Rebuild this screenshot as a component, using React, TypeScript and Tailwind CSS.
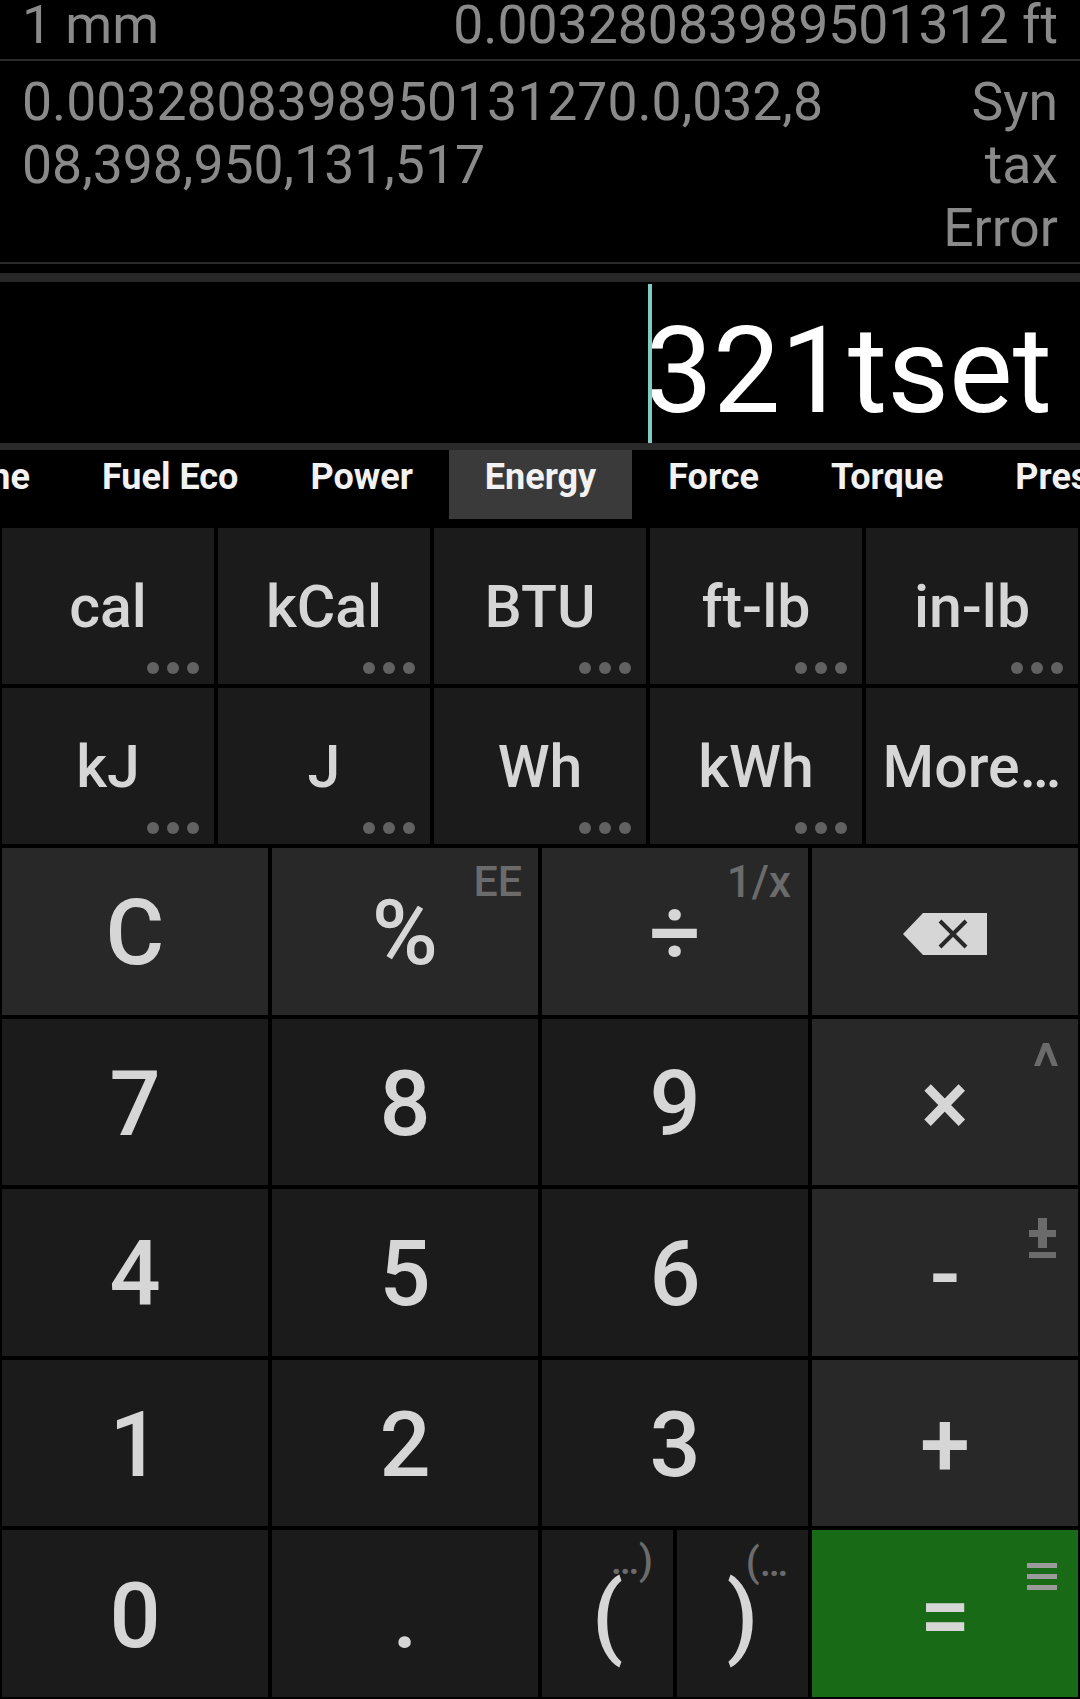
import React from "react";

const units: [string, boolean][] = [
  ["cal", true],
  ["kCal", true],
  ["BTU", true],
  ["ft-lb", true],
  ["in-lb", true],
  ["kJ", true],
  ["J", true],
  ["Wh", true],
  ["kWh", true],
  ["More…", false],
];

const tabs = ["Fuel Eco", "Power", "Energy", "Force", "Torque", "Pressure"];

function Dots() {
  return (
    <div className="absolute bottom-[10px] right-[15px] flex gap-[8px]">
      <span className="h-[12px] w-[12px] rounded-full bg-[#616161]" />
      <span className="h-[12px] w-[12px] rounded-full bg-[#616161]" />
      <span className="h-[12px] w-[12px] rounded-full bg-[#616161]" />
    </div>
  );
}

function Key({ children, dark, sub }: { children: React.ReactNode; dark?: boolean; sub?: React.ReactNode }) {
  return (
    <div className={`relative flex items-center justify-center pt-[6px] text-[90px] font-medium leading-none text-[#d6d6d6] ${dark ? "bg-[#1b1b1b]" : "bg-[#282828]"}`}>
      {sub}
      <span className="relative z-10">{children}</span>
    </div>
  );
}

function BackspaceIcon() {
  return (
    <svg width="84" height="42" viewBox="0 0 84 42">
      <path d="M0 21 L20 0 H84 V42 H20 Z" fill="#d6d6d6" />
      <path d="M37 8 L63 34 M63 8 L37 34" stroke="#282828" strokeWidth="4" />
    </svg>
  );
}

export default function App() {
  return (
    <div className="flex h-[1699px] w-[1080px] flex-col overflow-hidden bg-black font-['Roboto',sans-serif]">
      {/* history */}
      <div className="flex h-[59px] justify-between whitespace-nowrap px-[22px] text-[53.5px] leading-[50px] text-[#8a8a8a]">
        <span>1 mm</span>
        <span>0.00328083989501312 ft</span>
      </div>
      <div className="h-[2px] bg-[#2b2b2b]" />
      <div className="flex justify-between px-[22px] pb-[3px] pt-[9px] text-[53.5px] leading-[63px] text-[#8a8a8a]">
        <div>
          <div>0.0032808398950131270.0,032,8</div>
          <div>08,398,950,131,517</div>
        </div>
        <div className="text-right">
          <div>Syn</div>
          <div>tax</div>
          <div>Error</div>
        </div>
      </div>
      <div className="h-[2px] bg-[#2b2b2b]" />

      {/* input */}
      <div className="mt-[9px] h-[9px] bg-[#272727]" />
      <div className="flex h-[161px] justify-end pr-[28px]">
        <div className="relative z-10 mr-[-6px] mt-[2px] w-[4px] bg-[#80cbc4]" />
        <span className="flex items-center pt-[16px] text-[120px] leading-none text-white">321tset</span>
      </div>
      <div className="h-[7px] bg-[#2a2a2a]" />

      {/* category tabs */}
      <div className="flex h-[69px] overflow-hidden whitespace-nowrap text-[36px] font-bold leading-[55px] text-[#f2f2f2]">
        <div className="flex w-[66px] shrink-0 justify-end overflow-hidden pr-[36px]">
          <span>Time</span>
        </div>
        {tabs.map((t) => (
          <div key={t} className={`shrink-0 px-[36px] ${t === "Energy" ? "bg-[#3a3a3a]" : ""}`}>
            {t}
          </div>
        ))}
      </div>

      {/* unit keys */}
      <div className="mt-[9px] grid grid-cols-5 gap-[4px] px-[2px]">
        {units.map(([u, dots]) => (
          <div key={u} className="relative flex h-[156px] items-center justify-center bg-[#1b1b1b] text-[59px] font-medium leading-none text-[#d6d6d6]">
            {u}
            {dots && <Dots />}
          </div>
        ))}
      </div>

      {/* keypad */}
      <div className="mt-[4px] grid flex-1 grid-cols-4 grid-rows-5 gap-[4px] px-[2px] pb-[2px]">
        <Key>C</Key>
        <Key sub={<span className="absolute right-[16px] top-[12px] text-[43px] font-medium leading-none text-[#6b6b6b]">EE</span>}>%</Key>
        <Key sub={<span className="absolute right-[17px] top-[12px] text-[44px] leading-none text-[#6b6b6b]">1/x</span>}>÷</Key>
        <Key>
          <BackspaceIcon />
        </Key>

        <Key dark>7</Key>
        <Key dark>8</Key>
        <Key dark>9</Key>
        <Key
          sub={
            <svg className="absolute right-[20px] top-[24px]" width="24" height="23" viewBox="0 0 24 23">
              <path d="M0 23 L9 0 H15 L24 23 H18 L12 8 L6 23 Z" fill="#6b6b6b" />
            </svg>
          }
        >
          ×
        </Key>

        <Key dark>4</Key>
        <Key dark>5</Key>
        <Key dark>6</Key>
        <Key
          sub={
            <svg className="absolute right-[22px] top-[29px]" width="27" height="40" viewBox="0 0 27 40">
              <rect x="0" y="12" width="27" height="7" fill="#6b6b6b" />
              <rect x="9" y="0" width="9" height="30" fill="#6b6b6b" />
              <rect x="0" y="34" width="27" height="6" fill="#6b6b6b" />
            </svg>
          }
        >
          -
        </Key>

        <Key dark>1</Key>
        <Key dark>2</Key>
        <Key dark>3</Key>
        <Key>+</Key>

        <Key dark>0</Key>
        <Key dark>.</Key>
        <div className="grid grid-cols-2 gap-[4px]">
          <Key dark sub={<span className="absolute right-[20px] top-[11px] text-[40px] leading-none text-[#6b6b6b]">…)</span>}>(</Key>
          <Key dark sub={<span className="absolute right-[20px] top-[13px] text-[40px] leading-none text-[#6b6b6b]">(…</span>}>)</Key>
        </div>
        <div className="relative flex items-center justify-center bg-[#186a17] pt-[6px] text-[90px] font-medium leading-none text-[#d6d6d6]">
          <svg className="absolute right-[21px] top-[33px]" width="30" height="27" viewBox="0 0 30 27">
            <rect x="0" y="0" width="30" height="5" fill="#9b9b9b" />
            <rect x="0" y="11" width="30" height="5" fill="#9b9b9b" />
            <rect x="0" y="22" width="30" height="5" fill="#9b9b9b" />
          </svg>
          =
        </div>
      </div>
    </div>
  );
}
